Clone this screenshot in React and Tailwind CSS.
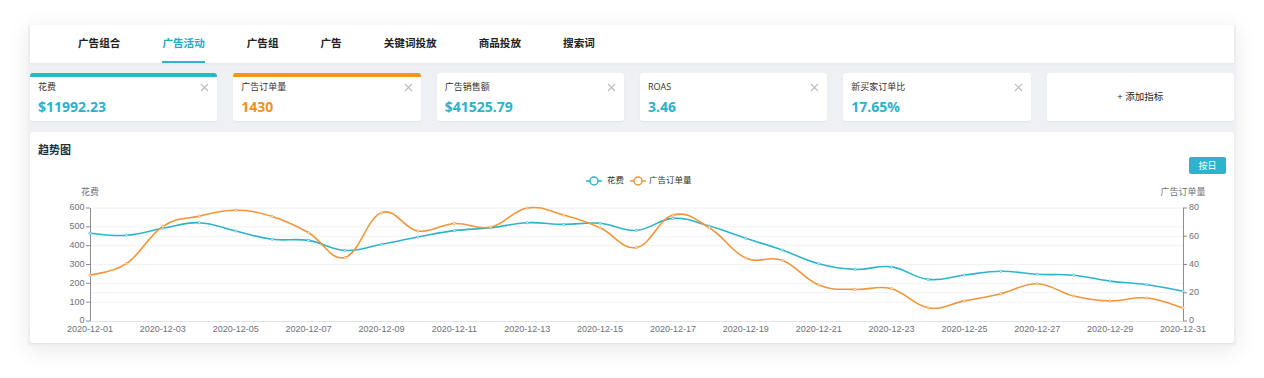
import React from "react";

const CYAN = "#2cb4cb";
const ORANGE = "#f0953a";

const tabs = ["广告组合", "广告活动", "广告组", "广告", "关键词投放", "商品投放", "搜索词"];

const cards = [
  { label: "花费", value: "$11992.23", bar: "border-[#2cb5cf]", color: "text-[#2bb2cb]" },
  { label: "广告订单量", value: "1430", bar: "border-[#f7931e]", color: "text-[#f39020]" },
  { label: "广告销售额", value: "$41525.79", bar: "border-white", color: "text-[#2bb2cb]" },
  { label: "ROAS", value: "3.46", bar: "border-white", color: "text-[#2bb2cb]" },
  { label: "新买家订单比", value: "17.65%", bar: "border-white", color: "text-[#2bb2cb]" },
];

const spend = [466, 455, 492, 522, 478, 434, 428, 375, 407, 446, 480, 495, 522, 513, 519, 481, 545, 504, 439, 377, 304, 274, 287, 221, 244, 264, 248, 243, 212, 193, 159];
const orders = [32.4, 40.6, 67, 74.3, 78.4, 74, 62.5, 45, 76.7, 63.7, 69, 66.5, 80, 75, 66, 52, 75, 66, 44.6, 43, 25.5, 22.4, 22.9, 9.4, 14.2, 19.3, 26.4, 17.7, 14.2, 16.3, 9.4];

// plot box inside the svg
const X0 = 60;
const X1 = 1153;
const Y0 = 34;
const Y1 = 147;
const step = (X1 - X0) / 30;

const smoothPath = (pts, k = 0.2) => {
  let d = `M${pts[0][0]},${pts[0][1]}`;
  for (let i = 0; i < pts.length - 1; i++) {
    const p0 = pts[i - 1] || pts[i];
    const p1 = pts[i];
    const p2 = pts[i + 1];
    const p3 = pts[i + 2] || p2;
    const c1x = p1[0] + (p2[0] - p0[0]) * k;
    const c1y = p1[1] + (p2[1] - p0[1]) * k;
    const c2x = p2[0] - (p3[0] - p1[0]) * k;
    const c2y = p2[1] - (p3[1] - p1[1]) * k;
    d += ` C${c1x.toFixed(1)},${c1y.toFixed(1)} ${c2x.toFixed(1)},${c2y.toFixed(1)} ${p2[0].toFixed(1)},${p2[1].toFixed(1)}`;
  }
  return d;
};

const spendPts = spend.map((v, i) => [X0 + i * step, Y1 - (v / 600) * (Y1 - Y0)]);
const orderPts = orders.map((v, i) => [X0 + i * step, Y1 - (v / 80) * (Y1 - Y0)]);

const CloseIcon = () => (
  <svg width="9" height="9" viewBox="0 0 9 9" className="shrink-0">
    <path d="M1 1 L8 8 M8 1 L1 8" stroke="#b9bcc2" strokeWidth="1.1" fill="none" />
  </svg>
);

const LegendIcon = ({ x, color }) => (
  <g>
    <line x1={x - 8} y1="7" x2={x + 8} y2="7" stroke={color} strokeWidth="1.5" />
    <circle cx={x} cy="7" r="4" fill="white" stroke={color} strokeWidth="1.5" />
  </g>
);

const TrendChart = () => {
  const leftTicks = [0, 100, 200, 300, 400, 500, 600];
  const rightTicks = [0, 20, 40, 60, 80];
  const font = '"Liberation Sans", "Noto Sans CJK SC", sans-serif';

  return (
    <svg width="1204" height="170" viewBox="0 0 1204 170" style={{ fontFamily: font }}>
      {/* legend */}
      <LegendIcon x={564} color={CYAN} />
      <text x="577" y="7" fontSize="8.5" fill="#333" dominantBaseline="middle">花费</text>
      <LegendIcon x={608} color={ORANGE} />
      <text x="619" y="7" fontSize="8.5" fill="#333" dominantBaseline="middle">广告订单量</text>

      {/* axis names */}
      <text x={X0} y="19" fontSize="9" fill="#6e7079" textAnchor="middle" dominantBaseline="middle">花费</text>
      <text x={X1} y="19" fontSize="9" fill="#6e7079" textAnchor="middle" dominantBaseline="middle">广告订单量</text>

      {/* split lines */}
      {leftTicks.slice(1).map((t) => {
        const y = Y1 - (t / 600) * (Y1 - Y0);
        return <line key={"l" + t} x1={X0} x2={X1} y1={y} y2={y} stroke="#f1f2f4" strokeWidth="1" />;
      })}
      {rightTicks.slice(1).map((t) => {
        const y = Y1 - (t / 80) * (Y1 - Y0);
        return <line key={"r" + t} x1={X0} x2={X1} y1={y} y2={y} stroke="#f1f2f4" strokeWidth="1" />;
      })}

      {/* x axis */}
      <line x1={X0} x2={X1} y1={Y1 + 0.5} y2={Y1 + 0.5} stroke="#e0e3e8" strokeWidth="1.2" />
      {spend.map((_, i) =>
        i % 2 === 0 ? (
          <text key={i} x={X0 + i * step} y="155.5" fontSize="9" fill="#6e7079" textAnchor="middle" dominantBaseline="middle">
            {`2020-12-${String(i + 1).padStart(2, "0")}`}
          </text>
        ) : null
      )}

      {/* left axis */}
      <line x1={X0 + 0.5} x2={X0 + 0.5} y1={Y0} y2={Y1} stroke="#8a8d94" strokeWidth="1" />
      {leftTicks.map((t) => {
        const y = Y1 - (t / 600) * (Y1 - Y0);
        return (
          <g key={t}>
            <line x1={X0 - 4} x2={X0} y1={y} y2={y} stroke="#8a8d94" strokeWidth="1" />
            <text x={X0 - 5.5} y={y} fontSize="9" fill="#6e7079" textAnchor="end" dominantBaseline="middle">{t}</text>
          </g>
        );
      })}

      {/* right axis */}
      <line x1={X1 + 0.5} x2={X1 + 0.5} y1={Y0} y2={Y1} stroke="#8a8d94" strokeWidth="1" />
      {rightTicks.map((t) => {
        const y = Y1 - (t / 80) * (Y1 - Y0);
        return (
          <g key={t}>
            <line x1={X1} x2={X1 + 4} y1={y} y2={y} stroke="#8a8d94" strokeWidth="1" />
            <text x={X1 + 6} y={y} fontSize="9" fill="#6e7079" dominantBaseline="middle">{t}</text>
          </g>
        );
      })}

      {/* series */}
      <path d={smoothPath(spendPts)} fill="none" stroke={CYAN} strokeWidth="1.6" />
      <path d={smoothPath(orderPts)} fill="none" stroke={ORANGE} strokeWidth="1.6" />
      {spendPts.map((p, i) => (
        <circle key={"s" + i} cx={p[0]} cy={p[1]} r="1.2" fill="#e6f7fa" stroke={CYAN} strokeWidth="0.6" />
      ))}
      {orderPts.map((p, i) => (
        <circle key={"o" + i} cx={p[0]} cy={p[1]} r="1.2" fill="#fdf0e2" stroke={ORANGE} strokeWidth="0.6" />
      ))}
    </svg>
  );
};

export default function App() {
  return (
    <div
      className="w-[1264px] h-[378px] bg-white pt-[25px] px-[28px]"
      style={{ fontFamily: '"Open Sans", "Noto Sans CJK SC", sans-serif' }}
    >
      <div className="bg-[#eff0f4] px-[2px] pb-[3px] shadow-[0_4px_22px_rgba(0,0,0,0.09)]">
        {/* tabs */}
        <div className="h-[38px] bg-white flex items-stretch pl-[27px] shadow-[0_1px_2px_rgba(0,0,0,0.05)]">
          {tabs.map((t, i) => (
            <div key={t} className="px-[21px] flex items-stretch">
              <span
                className={
                  i === 1
                    ? "flex items-center text-[10.6px] font-bold text-[#29a9c3] border-b-2 border-[#2cb4cb] pt-[2px]"
                    : "flex items-center text-[10.6px] font-bold text-[#222] border-b-2 border-transparent pt-[2px]"
                }
              >
                {t}
              </span>
            </div>
          ))}
        </div>

        {/* metric cards */}
        <div className="mt-[10px] grid grid-cols-6 gap-4">
          {cards.map((c) => (
            <div key={c.label} className={`h-[48px] bg-white rounded-[3px] border-t-4 ${c.bar} shadow-[0_1px_2px_rgba(0,0,0,0.06)] px-2`}>
              <div className="flex items-center justify-between pt-[4px] leading-[12px]">
                <span className="text-[9px] text-[#333]">{c.label}</span>
                <CloseIcon />
              </div>
              <div className={`mt-[5px] text-[14px] leading-[18px] font-bold ${c.color}`}>{c.value}</div>
            </div>
          ))}
          <div className="h-[48px] bg-white rounded-[3px] shadow-[0_1px_2px_rgba(0,0,0,0.06)] flex items-center justify-center text-[9.5px] text-[#222]">
            + 添加指标
          </div>
        </div>

        {/* trend chart */}
        <div className="mt-[11px] h-[211px] bg-white rounded-[3px] shadow-[0_1px_2px_rgba(0,0,0,0.06)]">
          <div className="px-2 pt-[10px] text-[11px] leading-[15px] font-bold text-[#1d3140]">趋势图</div>
          <div className="flex justify-end pr-2">
            <button className="w-[37px] h-[17px] bg-[#2cb4cb] rounded-[2px] text-white text-[9px] leading-none">按日</button>
          </div>
          <TrendChart />
        </div>
      </div>
    </div>
  );
}
